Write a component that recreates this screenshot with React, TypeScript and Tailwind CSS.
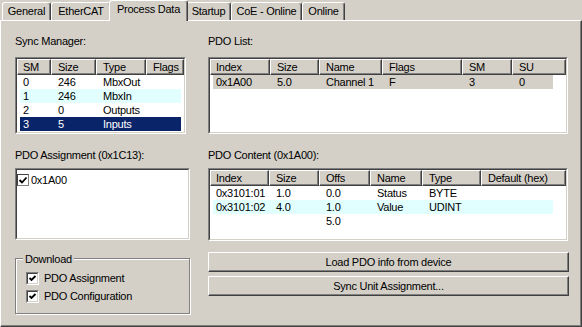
import React from 'react';
import clsx from 'clsx';

type Col = { label: string; w: string; rw: string };
type Row = { cells: string[]; tone?: 'sel' | 'cyan' | 'gray' };

const syncCols: Col[] = [
  { label: 'SM', w: 'w-[34px]', rw: 'w-[31px]' },
  { label: 'Size', w: 'w-[45px]', rw: 'w-[45px]' },
  { label: 'Type', w: 'w-[50px]', rw: 'w-[50px]' },
  { label: 'Flags', w: 'flex-1', rw: 'w-[35px]' },
];

const syncRows: Row[] = [
  { cells: ['0', '246', 'MbxOut', ''] },
  { cells: ['1', '246', 'MbxIn', ''], tone: 'cyan' },
  { cells: ['2', '0', 'Outputs', ''] },
  { cells: ['3', '5', 'Inputs', ''], tone: 'sel' },
];

const listCols: Col[] = [
  { label: 'Index', w: 'w-[60px]', rw: 'w-[57px]' },
  { label: 'Size', w: 'w-[49px]', rw: 'w-[49px]' },
  { label: 'Name', w: 'w-[63px]', rw: 'w-[63px]' },
  { label: 'Flags', w: 'w-[80px]', rw: 'w-[80px]' },
  { label: 'SM', w: 'w-[50px]', rw: 'w-[50px]' },
  { label: 'SU', w: 'flex-1', rw: 'w-[41px]' },
];

const listRows: Row[] = [{ cells: ['0x1A00', '5.0', 'Channel 1', 'F', '3', '0'], tone: 'gray' }];

const contentCols: Col[] = [
  { label: 'Index', w: 'w-[59px]', rw: 'w-[56px]' },
  { label: 'Size', w: 'w-[50px]', rw: 'w-[50px]' },
  { label: 'Offs', w: 'w-[51px]', rw: 'w-[51px]' },
  { label: 'Name', w: 'w-[52px]', rw: 'w-[52px]' },
  { label: 'Type', w: 'w-[59px]', rw: 'w-[59px]' },
  { label: 'Default (hex)', w: 'flex-1', rw: 'w-[72px]' },
];

const contentRows: Row[] = [
  { cells: ['0x3101:01', '1.0', '0.0', 'Status', 'BYTE', ''] },
  { cells: ['0x3101:02', '4.0', '1.0', 'Value', 'UDINT', ''], tone: 'cyan' },
  { cells: ['', '', '5.0', '', '', ''] },
];

const tabs = [
  { label: 'General', w: 'w-[49px]' },
  { label: 'EtherCAT', w: 'w-[60px]' },
  { label: 'Process Data', w: 'w-[79px]', active: true },
  { label: 'Startup', w: 'w-[45px]' },
  { label: 'CoE - Online', w: 'w-[71px]' },
  { label: 'Online', w: 'w-[43px]' },
];

function Sunken({ className, children }: { className?: string; children?: React.ReactNode }) {
  return (
    <div className={clsx('border border-t-[#808080] border-l-[#808080] border-b-white border-r-white', className)}>
      <div className="h-full border border-t-[#404040] border-l-[#404040] border-b-[#d4d0c8] border-r-[#d4d0c8] bg-white overflow-hidden">
        {children}
      </div>
    </div>
  );
}

function ListView({ cols, rows, className }: { cols: Col[]; rows: Row[]; className?: string }) {
  return (
    <Sunken className={className}>
      <div className="flex h-[16px]">
        {cols.map((c, i) => (
          <div
            key={c.label}
            className={clsx(
              'h-full whitespace-nowrap bg-[#d4d0c8] border border-t-white border-l-white border-r-[#404040] border-b-[#404040] shadow-[inset_-1px_-1px_0_#808080] leading-[14px]',
              i === 0 ? 'pl-[5px]' : 'pl-[6px]',
              c.w,
            )}
          >
            {c.label}
          </div>
        ))}
      </div>
      {rows.map((r, ri) => (
        <div
          key={ri}
          className={clsx(
            'flex w-max h-[14px] ml-[3px] leading-[14px] whitespace-nowrap',
            r.tone === 'sel' && 'bg-[#0a246a] text-white',
            r.tone === 'cyan' && 'bg-[#e1ffff]',
            r.tone === 'gray' && 'bg-[#d4d0c8]',
          )}
        >
          {r.cells.map((cell, ci) => (
            <div key={ci} className={clsx(cols[ci].rw, ci === 0 ? 'pl-[3px]' : 'pl-[7px]')}>
              {cell}
            </div>
          ))}
        </div>
      ))}
    </Sunken>
  );
}

function Check3D() {
  return (
    <div className="w-[13px] h-[13px] shrink-0 border border-t-[#808080] border-l-[#808080] border-b-white border-r-white">
      <div className="h-full border border-t-[#404040] border-l-[#404040] border-b-[#d4d0c8] border-r-[#d4d0c8] bg-white">
        <svg viewBox="0 0 9 9" className="w-[9px] h-[9px] block">
          <polyline points="1.5,4 3.5,6 7.5,2" fill="none" stroke="#000" strokeWidth="1.8" />
        </svg>
      </div>
    </div>
  );
}

function Button({ children, className }: { children: React.ReactNode; className?: string }) {
  return (
    <div
      className={clsx(
        'h-[20px] w-full flex items-center justify-center bg-[#d4d0c8] border border-t-white border-l-white border-r-[#404040] border-b-[#404040] shadow-[inset_-1px_-1px_0_#808080] leading-[13px]',
        className,
      )}
    >
      {children}
    </div>
  );
}

export default function App() {
  return (
    <div className="w-[582px] h-[327px] bg-[#d4d0c8] flex flex-col text-[11px] tracking-[-0.25px] text-black font-['Liberation_Sans',Arial,sans-serif] overflow-hidden">
      <div className="flex items-end h-[20px] pl-[2px]">
        {tabs.map((t) =>
          t.active ? (
            <div
              key={t.label}
              className={clsx(
                'relative z-10 h-[21px] -mb-[1px] -mx-[2px] bg-[#d4d0c8] flex justify-center pt-[2px] leading-[13px] whitespace-nowrap rounded-t-[3px] border-t border-l border-white border-r border-r-[#404040] shadow-[inset_-1px_0_0_#808080]',
                t.w,
              )}
            >
              {t.label}
            </div>
          ) : (
            <div
              key={t.label}
              className={clsx(
                'h-[18px] flex justify-center pt-[2px] leading-[13px] whitespace-nowrap rounded-t-[3px] border-t border-l border-white border-r border-r-[#404040] shadow-[inset_-1px_0_0_#808080]',
                t.w,
              )}
            >
              {t.label}
            </div>
          ),
        )}
      </div>

      <div className="flex-1 border border-t-white border-l-white border-r-[#404040] border-b-[#404040] shadow-[inset_-1px_-1px_0_#808080]">
        <div className="grid grid-cols-[175px_361px] gap-x-[18px] pl-[14px]">
          {/* left column */}
          <div className="flex flex-col">
            <div className="mt-[14px] leading-[13px]">Sync Manager:</div>
            <ListView cols={syncCols} rows={syncRows} className="mt-[9px] w-[171px] h-[77px]" />
            <div className="mt-[15px] leading-[13px]">PDO Assignment (0x1C13):</div>
            <Sunken className="mt-[6px] h-[72px] w-full">
              <div className="flex items-center gap-[2px] h-[14px] mt-[3px] leading-[14px]">
                <div className="w-[12px] h-[12px] border border-t-[#404040] border-l-[#404040] border-b-[#808080] border-r-[#808080] bg-white">
                  <svg viewBox="0 0 10 10" className="w-[10px] h-[10px] block">
                    <polyline points="1.5,5 4,7.5 8.5,2.5" fill="none" stroke="#000" strokeWidth="1.8" />
                  </svg>
                </div>
                <span>0x1A00</span>
              </div>
            </Sunken>
            <div className="relative mt-[18px] border border-[#808080] shadow-[inset_1px_1px_0_#fff,1px_1px_0_#fff] pl-[10px] pt-[13px] pb-[10px] flex flex-col gap-[5px]">
              <span className="absolute -top-[6px] left-[7px] px-[2px] bg-[#d4d0c8] leading-[13px]">Download</span>
              <div className="flex items-center gap-[5px] h-[13px] leading-[13px]">
                <Check3D />
                <span>PDO Assignment</span>
              </div>
              <div className="flex items-center gap-[5px] h-[13px] leading-[13px]">
                <Check3D />
                <span>PDO Configuration</span>
              </div>
            </div>
          </div>

          {/* right column */}
          <div className="flex flex-col">
            <div className="mt-[14px] leading-[13px]">PDO List:</div>
            <ListView cols={listCols} rows={listRows} className="mt-[9px] w-[360px] h-[77px]" />
            <div className="mt-[15px] leading-[13px]">PDO Content (0x1A00):</div>
            <ListView cols={contentCols} rows={contentRows} className="mt-[6px] w-[360px] h-[73px]" />
            <Button className="mt-[11px]">Load PDO info from device</Button>
            <Button className="mt-[4px]">Sync Unit Assignment...</Button>
          </div>
        </div>
      </div>
    </div>
  );
}
